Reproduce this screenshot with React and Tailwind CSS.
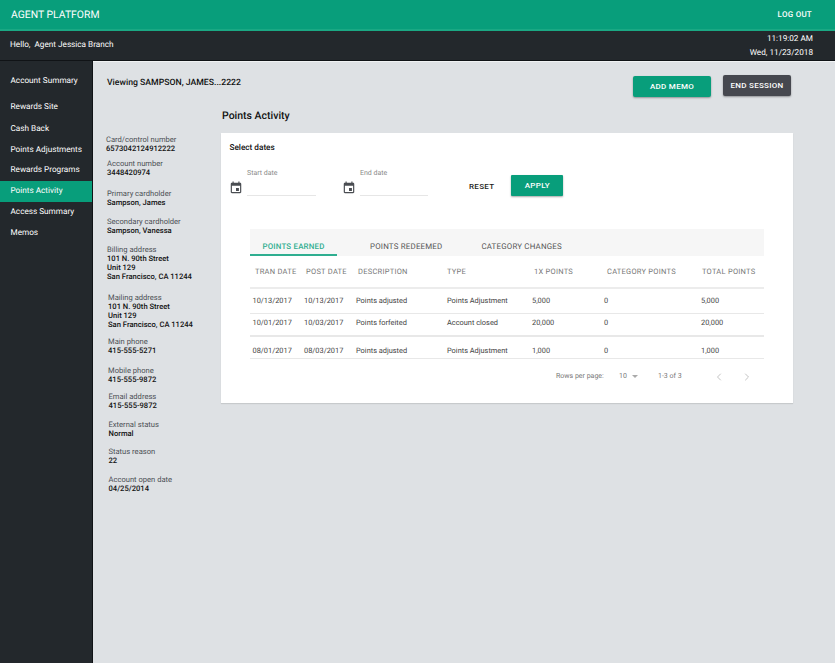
import React from "react";
import { ChevronLeft, ChevronRight } from "lucide-react";

const navItems = [
  { label: "Account Summary", cls: "mt-[10px]" },
  { label: "Rewards Site", cls: "mt-[5px]" },
  { label: "Cash Back", cls: "mt-[1px]" },
  { label: "Points Adjustments", cls: "" },
  { label: "Rewards Programs", cls: "" },
  { label: "Points Activity", cls: "", active: true },
  { label: "Access Summary", cls: "" },
  { label: "Memos", cls: "" },
];

const details = [
  { label: "Card/control number", lines: ["6573042124912222"], cls: "", x: "pl-0" },
  { label: "Account number", lines: ["3448420974"], cls: "mt-[6px]", x: "pl-[1px]" },
  { label: "Primary cardholder", lines: ["Sampson, James"], cls: "mt-[12px]", x: "pl-[1px]" },
  { label: "Secondary cardholder", lines: ["Sampson, Vanessa"], cls: "mt-[10px]", x: "pl-[1px]" },
  { label: "Billing address", lines: ["101 N. 90th Street", "Unit 129", "San Francisco, CA 11244"], cls: "mt-[10px]", x: "pl-[1px]" },
  { label: "Mailing address", lines: ["101 N. 90th Street", "Unit 129", "San Francisco, CA 11244"], cls: "mt-[12px]", x: "pl-[2px]" },
  { label: "Main phone", lines: ["415-555-5271"], cls: "mt-[8px]", x: "pl-[2px]" },
  { label: "Mobile phone", lines: ["415-555-9872"], cls: "mt-[11px]", x: "pl-[2px]" },
  { label: "Email address", lines: ["415-555-9872"], cls: "mt-[8px]", x: "pl-[2.5px]" },
  { label: "External status", lines: ["Normal"], cls: "mt-[10px]", x: "pl-[2.5px]" },
  { label: "Status reason", lines: ["22"], cls: "mt-[9px]", x: "pl-[2.5px]" },
  { label: "Account open date", lines: ["04/25/2014"], cls: "mt-[10px]", x: "pl-[2.5px]" },
];

const columns = [
  { name: "TRAN DATE", w: "w-[51px]" },
  { name: "POST DATE", w: "w-[52px]" },
  { name: "DESCRIPTION", w: "w-[89px]" },
  { name: "TYPE", w: "w-[87px]" },
  { name: "1X POINTS", w: "w-[73px]" },
  { name: "CATEGORY POINTS", w: "w-[95px]" },
  { name: "TOTAL POINTS", w: "w-[60px]" },
];

const rows = [
  { cells: ["10/13/2017", "10/13/2017", "Points adjusted", "Points Adjustment", "5,000", "0", "5,000"], h: "h-[25px]", border: "border-b" },
  { cells: ["10/01/2017", "10/03/2017", "Points forfeited", "Account closed", "20,000", "0", "20,000"], h: "h-[23px] pb-[3px]", border: "border-b-2" },
  { cells: ["08/01/2017", "08/03/2017", "Points adjusted", "Points Adjustment", "1,000", "0", "1,000"], h: "h-[22px] pt-[6px]", border: "border-b" },
];

const rowWidths = ["w-[51.5px]", "w-[52px]", "w-[91px]", "w-[85px]", "w-[72px]", "w-[97px]", "w-[60px]"];

function CalendarIcon() {
  return (
    <svg width="14" height="14" viewBox="0 0 24 24" fill="#4a4d52">
      <path d="M17 12h-5v5h5v-5zM16 1v2H8V1H6v2H5c-1.11 0-1.99.9-1.99 2L3 19c0 1.1.89 2 2 2h14c1.1 0 2-.9 2-2V5c0-1.1-.9-2-2-2h-1V1h-2zm3 18H5V8h14v11z" />
    </svg>
  );
}

function DateField({ label, w }) {
  return (
    <div className="flex items-end gap-[4px]">
      <div className="mb-[1px]">
        <CalendarIcon />
      </div>
      <div className={`${w} border-b border-[#e6e6e6] h-[30px] pt-[2px] text-[7px] leading-[10px] text-[#8a8a8a]`}>
        {label}
      </div>
    </div>
  );
}

function App() {
  return (
    <div className="w-[835px] h-[663px] overflow-hidden flex flex-col bg-[#23282c] font-['Roboto',sans-serif] antialiased [text-rendering:geometricPrecision]">
      {/* top bar */}
      <header className="h-[31px] shrink-0 bg-[#089e7b] border-b-2 border-[#1aa884] flex items-center justify-between pl-[11px] pr-[23px]">
        <span className="text-[10.4px] text-white">AGENT PLATFORM</span>
        <span className="text-[8px] font-medium tracking-[0.25px] text-white">LOG OUT</span>
      </header>

      {/* greeting */}
      <div className="h-[30px] shrink-0 flex items-center justify-between pl-[10px] pr-[22px] text-white border-b border-[#101316]">
        <span className="text-[8.2px]">Hello,&nbsp; Agent Jessica Branch</span>
        <div className="text-right text-[8.2px] leading-[14px] pt-[1px]">
          <div>11:19:02 AM</div>
          <div>Wed, 11/23/2018</div>
        </div>
      </div>

      <div className="flex flex-1 min-h-0">
        {/* sidebar */}
        <aside className="w-[93px] shrink-0 border-r border-[#101316] text-white text-[8.2px]">
          {navItems.map((item) => (
            <div
              key={item.label}
              className={`h-[20.8px] flex items-center pl-[10.5px] ${item.cls} ${item.active ? "bg-[#089e7b]" : ""}`}
            >
              {item.label}
            </div>
          ))}
        </aside>

        <main className="flex-1 bg-[#dee1e4] border-t border-[#f0f2f3] pl-[14px]">
          <div className="flex items-start justify-between pr-[44px] pt-[13px]">
            <span className="text-[8.7px] font-medium text-[#111] mt-[2px]">Viewing SAMPSON, JAMES...2222</span>
            <div className="flex items-start gap-[12px]">
              <button className="w-[78px] h-[21px] mt-[1px] rounded-[2px] bg-[#089e7b] text-white text-[8px] font-medium tracking-[0.3px] shadow-[0_1px_2px_rgba(0,0,0,0.35)]">
                ADD MEMO
              </button>
              <button className="w-[68px] h-[21px] rounded-[2px] bg-[#46484f] text-white text-[8px] font-medium tracking-[0.3px] shadow-[0_1px_2px_rgba(0,0,0,0.35)]">
                END SESSION
              </button>
            </div>
          </div>

          <div className="flex mt-[11px]">
            {/* account details */}
            <div className="w-[116px] shrink-0 pt-[27px] -ml-[1px] text-[7.6px]">
              {details.map((d) => (
                <div key={d.label} className={`${d.cls} ${d.x}`}>
                  <div className="leading-[9px] text-[#4c5055]">{d.label}</div>
                  {d.lines.map((line) => (
                    <div key={line} className="leading-[9px] font-medium text-[#111]">
                      {line}
                    </div>
                  ))}
                </div>
              ))}
            </div>

            <div className="w-[572px] -ml-[1px]">
              <h2 className="text-[10.5px] leading-[14px] font-medium text-[#111] pl-[1px] pt-[1px]">Points Activity</h2>
              <section className="mt-[10px] h-[270px] bg-white shadow-[0_1px_1px_rgba(0,0,0,0.1)] pt-[10px]">
                <div className="pl-[8.5px] text-[8.2px] leading-[10px] font-medium text-[#111]">Select dates</div>

                <div className="flex items-end mt-[13px] pl-[8px]">
                  <DateField label="Start date" w="w-[69px]" />
                  <div className="ml-[26px]">
                    <DateField label="End date" w="w-[68px]" />
                  </div>
                  <button className="ml-[41px] mb-[3px] text-[8px] font-medium tracking-[0.3px] text-[#222]">RESET</button>
                  <button className="ml-[17px] w-[52px] h-[21px] rounded-[1px] bg-[#089e7b] text-white text-[8px] font-medium tracking-[0.3px] shadow-[0_1px_2px_rgba(0,0,0,0.35)]">
                    APPLY
                  </button>
                </div>

                {/* tabs + table */}
                <div className="ml-[29px] mt-[33px] w-[514px]">
                  <div className="h-[27px] bg-[#f6f6f6] flex items-end text-[7.9px] tracking-[0.2px] text-[#555]">
                    <div className="w-[87px] h-[15px] border-b-2 border-[#2fae90] text-center font-medium text-[#2fae90] leading-[12px]">
                      POINTS EARNED
                    </div>
                    <div className="ml-[33px] h-[15px] leading-[11px]">POINTS REDEEMED</div>
                    <div className="ml-[39px] h-[15px] leading-[11px]">CATEGORY CHANGES</div>
                  </div>

                  <div className="h-[33px] flex items-center pl-[5px] pt-[1px] border-b-2 border-[#ececec] text-[7.5px] tracking-[0.25px] text-[#777]">
                    {columns.map((c) => (
                      <div key={c.name} className={`${c.w} shrink-0 whitespace-nowrap`}>
                        {c.name}
                      </div>
                    ))}
                  </div>

                  {rows.map((row) => (
                    <div
                      key={row.cells[0]}
                      className={`${row.h} ${row.border} border-[#e8e8e8] flex items-center pl-[2.5px] text-[7.4px] text-[#444]`}
                    >
                      {row.cells.map((cell, i) => (
                        <div key={i} className={`${rowWidths[i]} shrink-0 whitespace-nowrap`}>
                          {cell}
                        </div>
                      ))}
                    </div>
                  ))}

                  <div className="flex items-center h-[35px] text-[7px] text-[#777] pl-[306px]">
                    <span className="w-[63px]">Rows per page:</span>
                    <span className="w-[39px] flex items-center gap-[5px]">
                      10
                      <span className="w-0 h-0 border-x-[3px] border-x-transparent border-t-[3px] border-t-[#aaa]"></span>
                    </span>
                    <span className="w-[55px]">1-3 of 3</span>
                    <ChevronLeft size={12} className="text-[#c4c4c4]" />
                    <ChevronRight size={12} className="text-[#c4c4c4] ml-[16px]" />
                  </div>
                </div>
              </section>
            </div>
          </div>
        </main>
      </div>
    </div>
  );
}

export default App;
